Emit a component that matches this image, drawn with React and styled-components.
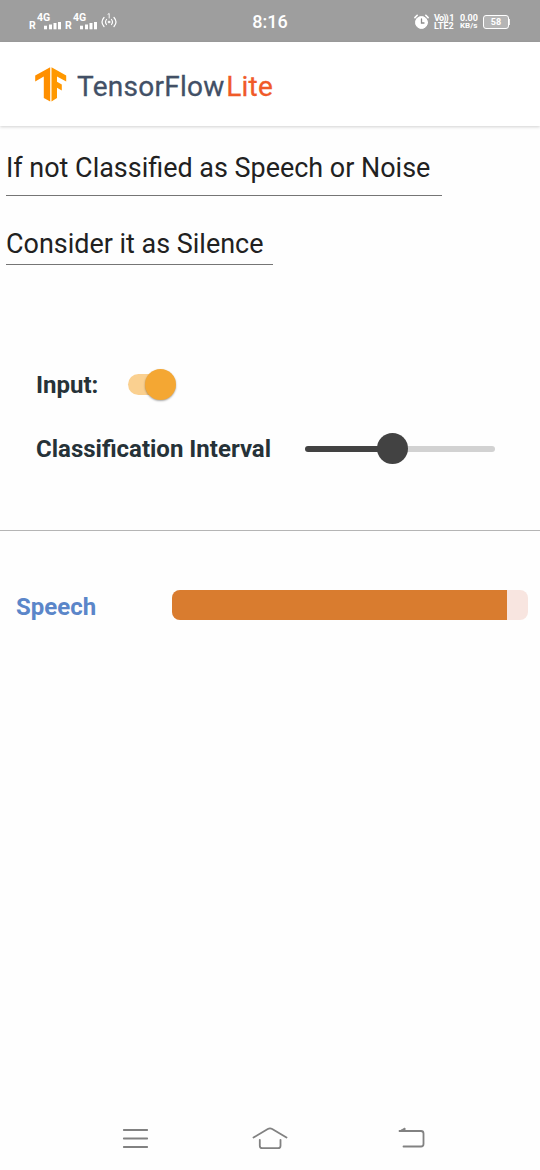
import React from "react";
import styled, { createGlobalStyle } from "styled-components";

const GlobalStyle = createGlobalStyle`
  * { box-sizing: border-box; }
  body { margin: 0; background: #fefefe; font-family: Roboto, "Noto Sans", sans-serif; }
  svg { display: block; flex: none; }
`;

const Screen = styled.div`
  width: 540px;
  height: 1170px;
  display: flex;
  flex-direction: column;
  background: #fefefe;
  overflow: hidden;
`;

const StatusBar = styled.header`
  height: 42px;
  flex: none;
  display: grid;
  grid-template-columns: 1fr auto 1fr;
  align-items: center;
  padding: 1px 29px 0 29px;
  background: #9e9e9e;
  color: #fff;
`;

const Signals = styled.div`
  display: flex;
  align-items: flex-end;
  height: 20px;
  padding-bottom: 2px;
`;

const Roaming = styled.span`
  font-size: 10.5px;
  line-height: 9px;
  font-weight: 700;
  width: 8px;
`;

const SignalColumn = styled.div`
  width: 28px;
  display: flex;
  flex-direction: column;
`;

const Network = styled.span`
  font-size: 10.5px;
  font-weight: 700;
  line-height: 8px;
`;

const Clock = styled.time`
  font-size: 18px;
  line-height: 20px;
  font-weight: 500;
`;

const StatusRight = styled.div`
  display: flex;
  justify-content: flex-end;
  align-items: center;
  margin-right: 1px;
`;

const TinyStack = styled.div`
  width: ${(p) => p.$width}px;
  margin-left: ${(p) => p.$gap}px;
  line-height: 8px;
  font-weight: 700;
  white-space: nowrap;
`;

const TinyLine = styled.div`
  font-size: ${(p) => p.$size}px;
  letter-spacing: ${(p) => p.$spacing || 0}px;
`;

const Battery = styled.div`
  width: 26px;
  height: 14px;
  margin-left: 6px;
  border: 1px solid #fff;
  border-radius: 3px;
  display: flex;
  align-items: center;
  justify-content: center;
  background: #b5b5b5;
  font-size: 9px;
  font-weight: 700;
`;

const BatteryTip = styled.div`
  width: 1px;
  height: 6px;
  background: #eee;
`;

const AppBar = styled.div`
  height: 84px;
  flex: none;
  display: flex;
  align-items: center;
  padding: 1px 0 0 35px;
  background: #fff;
  box-shadow: 0 1px 3px rgba(0, 0, 0, 0.18);
`;

const Brand = styled.h1`
  margin: 5px 0 0 10px;
  font-size: 28px;
  line-height: 34px;
  font-weight: 400;
  letter-spacing: 0.28px;
  color: #425066;
  -webkit-text-stroke: 0.3px currentColor;
  display: flex;
`;

const BrandAccent = styled.span`
  color: #f05a28;
  margin-left: 1.5px;
`;

const Field = styled.div`
  width: ${(p) => p.$width}px;
  height: ${(p) => p.$height}px;
  flex: none;
  margin: ${(p) => p.$top}px 0 0 6px;
  border-bottom: 1px solid #757575;
  font-size: 26.95px;
  line-height: 32px;
  color: #212121;
  white-space: nowrap;
`;

const Controls = styled.section`
  flex: none;
  height: 266px;
  padding: 100px 0 0 36px;
  border-bottom: 1px solid #b5b5b5;
`;

const ControlRow = styled.div`
  height: 40px;
  display: flex;
  align-items: center;
  margin-bottom: ${(p) => p.$bottom || 0}px;
`;

const ControlLabel = styled.label`
  width: ${(p) => p.$width}px;
  font-size: 24px;
  line-height: 30px;
  font-weight: 700;
  color: #263238;
  white-space: nowrap;
`;

const SwitchTrack = styled.div`
  width: 46px;
  height: 21px;
  margin: 0 0 2px -0.5px;
  border-radius: 11px;
  background: #fad090;
  display: flex;
  align-items: center;
  justify-content: flex-end;
`;

const SwitchThumb = styled.div`
  width: 31px;
  height: 31px;
  flex: none;
  margin-right: -2px;
  border-radius: 50%;
  background: #f4a733;
  box-shadow: 0 1px 2px rgba(0, 0, 0, 0.35);
`;

const Slider = styled.div`
  width: 190px;
  margin-bottom: 1px;
  display: flex;
  align-items: center;
`;

const SliderTrack = styled.div`
  height: 6px;
  width: ${(p) => p.$width}px;
  background: ${(p) => p.$color};
  border-radius: ${(p) => p.$radius};
`;

const SliderThumb = styled.div`
  width: 31px;
  height: 31px;
  flex: none;
  margin: 0 -1px;
  position: relative;
  border-radius: 50%;
  background: #424242;
`;

const Result = styled.section`
  display: flex;
  align-items: center;
  flex: none;
  height: 30px;
  margin-top: 59px;
  padding-left: 16px;
`;

const ResultLabel = styled.div`
  width: 156px;
  padding-top: 3px;
  font-size: 24px;
  line-height: 30px;
  font-weight: 700;
  color: #5b86c9;
`;

const Meter = styled.div`
  width: 356px;
  height: 30px;
  border-radius: 8px;
  background: #f8e5e0;
  overflow: hidden;
`;

const MeterFill = styled.div`
  width: 94.1%;
  height: 100%;
  background: #d97c2f;
`;

const NavBar = styled.nav`
  margin-top: auto;
  flex: none;
  height: 63px;
  display: flex;
  align-items: center;
  padding-left: 122px;
`;

const NavIcon = styled.div`
  margin-left: ${(p) => p.$gap || 0}px;
  padding-bottom: ${(p) => p.$lift || 0}px;
`;

const Signal = () => (
  <>
    <Roaming>R</Roaming>
    <SignalColumn>
      <Network>4G</Network>
      <svg width="28" height="8" viewBox="0 0 28 8" fill="#fff">
        <rect x="7" y="3.7" width="3" height="3.6" />
        <rect x="12" y="2.5" width="3" height="4.8" />
        <rect x="16.5" y="1" width="3" height="6.3" />
        <rect x="21" y="0" width="3" height="7.3" />
      </svg>
    </SignalColumn>
  </>
);

const Hotspot = () => (
  <svg width="16" height="18" viewBox="0 0 16 18" fill="none" stroke="#fff" strokeWidth="1.2" strokeLinecap="round">
    <path d="M3 5.5Q-1 10 3 14.5M13 5.5Q17 10 13 14.5M5.5 7.5Q3.5 10 5.5 12.5M10.5 7.5Q12.5 10 10.5 12.5" />
    <path d="M7 2.2L8.2 1.5V6" strokeWidth="0.9" />
    <circle cx="8" cy="10" r="1" fill="#fff" strokeWidth="0.6" />
  </svg>
);

const Alarm = () => (
  <svg width="15" height="16" viewBox="0 0 15 16" fill="none" stroke="#fff" strokeLinecap="round">
    <circle cx="7.5" cy="8.5" r="6" fill="#fff" />
    <path d="M.9 3.6L3.2 1.3M14.1 3.6L11.8 1.3" strokeWidth="1.6" />
    <path d="M7.5 5V9H10" stroke="#8c8c8c" strokeWidth="1.3" />
  </svg>
);

const Logo = () => (
  <svg width="32" height="35" viewBox="0 0 32 35">
    <path d="M15.2 .2V34.6L8.8 31V9.4L.2 14.4V8.4Z" fill="#ff8f00" />
    <path d="M16.5.2L31.2 8.4V14.6L22 9.4V14.8L26.8 17.6V23.6L22 20.8V31L16.5 34.6Z" fill="#ff9800" />
  </svg>
);

export default function App() {
  return (
    <Screen>
      <GlobalStyle />
      <StatusBar>
        <Signals>
          <Signal />
          <Signal />
          <Hotspot />
        </Signals>
        <Clock>8:16</Clock>
        <StatusRight>
          <Alarm />
          <TinyStack $width={21} $gap={5}>
            <TinyLine $size={9} $spacing={-0.8}>Vo)) 1</TinyLine>
            <TinyLine $size={9}>LTE2</TinyLine>
          </TinyStack>
          <TinyStack $width={17} $gap={5}>
            <TinyLine $size={9} $spacing={-0.1}>0.00</TinyLine>
            <TinyLine $size={8}>KB/s</TinyLine>
          </TinyStack>
          <Battery>58</Battery>
          <BatteryTip />
        </StatusRight>
      </StatusBar>
      <AppBar>
        <Logo />
        <Brand>
          TensorFlow<BrandAccent>Lite</BrandAccent>
        </Brand>
      </AppBar>
      <Field $width={436} $height={44} $top={26}>
        If not Classified as Speech or Noise
      </Field>
      <Field $width={267} $height={37} $top={32}>
        Consider it as Silence
      </Field>
      <Controls>
        <ControlRow $bottom={24}>
          <ControlLabel $width={92}>Input:</ControlLabel>
          <SwitchTrack>
            <SwitchThumb />
          </SwitchTrack>
        </ControlRow>
        <ControlRow>
          <ControlLabel $width={269}>Classification Interval</ControlLabel>
          <Slider>
            <SliderTrack $width={73} $color="#424242" $radius="3px 0 0 3px" />
            <SliderThumb />
            <SliderTrack $width={88} $color="#d2d2d2" $radius="0 3px 3px 0" />
          </Slider>
        </ControlRow>
      </Controls>
      <Result>
        <ResultLabel>Speech</ResultLabel>
        <Meter>
          <MeterFill />
        </Meter>
      </Result>
      <NavBar>
        <NavIcon>
          <svg width="27" height="22" viewBox="0 0 27 22" stroke="#818181" strokeWidth="1.8" strokeLinecap="round">
            <path d="M1.8 2H25.2M1.8 10.5H25.2M1.8 19H25.2" />
          </svg>
        </NavIcon>
        <NavIcon $gap={103} $lift={1}>
          <svg width="36" height="24" viewBox="0 0 36 24" fill="none" stroke="#818181" strokeWidth="1.8" strokeLinecap="round" strokeLinejoin="round">
            <path d="M1.5 11.5L15.8 3Q18 1.8 20.2 3L34.5 11.5M7.8 13.8V19.7Q7.8 22.2 10.3 22.2H26Q28.5 22.2 28.5 19.7V13.8" />
          </svg>
        </NavIcon>
        <NavIcon $gap={110} $lift={1}>
          <svg width="28" height="24" viewBox="0 0 28 24" fill="none" stroke="#818181" strokeWidth="1.8" strokeLinecap="round" strokeLinejoin="round">
            <path d="M1.5 5H23Q25.5 5 25.5 7.5V18Q25.5 20.5 23 20.5H5.5" />
            <path d="M1.5 5L7 2V5Z" fill="#818181" strokeWidth="1" />
          </svg>
        </NavIcon>
      </NavBar>
    </Screen>
  );
}
